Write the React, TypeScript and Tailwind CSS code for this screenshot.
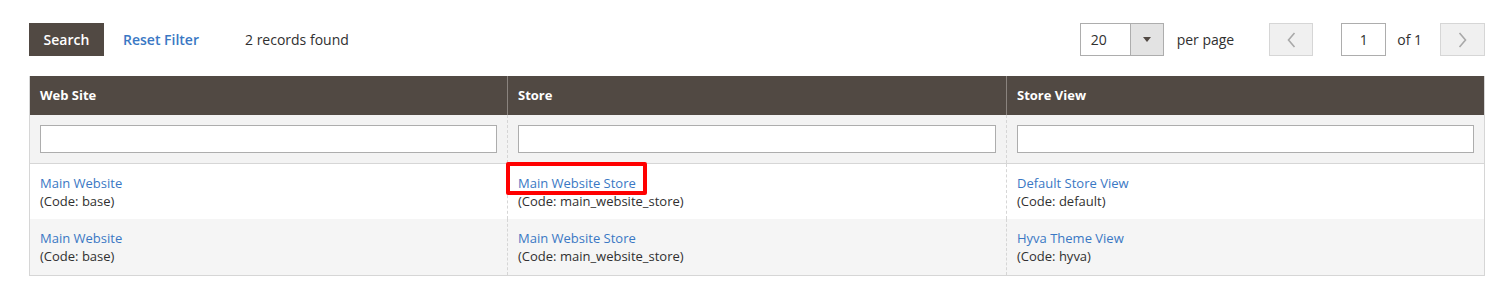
import React from "react";

const rows = [
  {
    bg: "bg-white",
    h: "h-[55px]",
    site: "Main Website",
    siteCode: "base",
    store: "Main Website Store",
    storeCode: "main_website_store",
    view: "Default Store View",
    viewCode: "default",
    highlight: true,
  },
  {
    bg: "bg-[#f5f5f5]",
    h: "h-[56px]",
    site: "Main Website",
    siteCode: "base",
    store: "Main Website Store",
    storeCode: "main_website_store",
    view: "Hyva Theme View",
    viewCode: "hyva",
    highlight: false,
  },
];

function Cell({ name, code, last, highlight }: { name: string; code: string; last?: boolean; highlight?: boolean }) {
  return (
    <div
      className={`relative pl-[10px] pt-[10px] h-full ${last ? "" : "border-r border-dashed border-[#d6d6d6]"}`}
    >
      <div className="text-[13px] leading-[18px] text-[#3a78c4]">{name}</div>
      <div className="text-[13px] leading-[18px] text-[#303030]">(Code: {code})</div>
      {highlight && (
        <div className="absolute left-[-2px] top-[-2px] w-[141px] h-[33px] border-[4px] border-[#ff0000] rounded-[2px]" />
      )}
    </div>
  );
}

export default function App() {
  return (
    <div
      className="w-[1510px] h-[302px] bg-white pl-[29px] pr-[25px] pt-[23px]"
      style={{ fontFamily: '"Open Sans", "Noto Sans", sans-serif' }}
    >
      <div className="flex items-center h-[33px] w-[1456px]">
        <button className="h-[33px] w-[75px] bg-[#514943] text-white text-[14px] font-semibold">Search</button>
        <span className="ml-[19px] text-[14px] font-semibold text-[#3a78c4]">Reset Filter</span>
        <span className="ml-[46px] text-[14px] text-[#303030]">2 records found</span>
        <div className="ml-auto flex items-center">
          <div className="flex h-[33px] w-[84px] border border-[#adadad]">
            <div className="flex-1 flex items-center pl-[10px] text-[14px] text-[#303030]">20</div>
            <div className="w-[33px] bg-[#e3e3e3] border-l border-[#adadad] flex items-center justify-center">
              <svg width="8" height="5" viewBox="0 0 8 5">
                <path d="M0 0 L8 0 L4 5 Z" fill="#514943" />
              </svg>
            </div>
          </div>
          <span className="ml-[13px] text-[14px] text-[#303030]">per page</span>
          <div className="ml-[35px] w-[44px] h-[33px] bg-[#f0f0f0] border border-[#d6d6d6] flex items-center justify-center">
            <svg width="9" height="16" viewBox="0 0 9 16">
              <path d="M7.5 1 L1.5 8 L7.5 15" stroke="#a8a8a8" strokeWidth="1.6" fill="none" />
            </svg>
          </div>
          <div className="ml-[28px] w-[45px] h-[33px] border border-[#adadad] flex items-center justify-center text-[14px] text-[#303030]">
            1
          </div>
          <span className="ml-[11px] text-[14px] text-[#303030]">of 1</span>
          <div className="ml-[18px] w-[45px] h-[33px] bg-[#f0f0f0] border border-[#d6d6d6] flex items-center justify-center">
            <svg width="9" height="16" viewBox="0 0 9 16">
              <path d="M1.5 1 L7.5 8 L1.5 15" stroke="#a8a8a8" strokeWidth="1.6" fill="none" />
            </svg>
          </div>
        </div>
      </div>

      <div className="mt-[20px] w-[1456px] border-l border-r border-b border-[#d6d6d6]">
        <div className="grid grid-cols-[478px_499px_1fr] h-[39px] bg-[#514943] text-white text-[13px] font-bold">
          <div className="pl-[10px] flex items-center border-r border-[#8a837e]">Web Site</div>
          <div className="pl-[10px] flex items-center border-r border-[#8a837e]">Store</div>
          <div className="pl-[10px] flex items-center">Store View</div>
        </div>
        <div className="grid grid-cols-[478px_499px_1fr] h-[49px] bg-[#f3f3f3] border-b border-[#d6d6d6]">
          <div className="pl-[10px] pr-[10px] pt-[10px] border-r border-dashed border-[#d6d6d6]">
            <div className="h-[28px] bg-white border border-[#adadad]" />
          </div>
          <div className="pl-[10px] pr-[10px] pt-[10px] border-r border-dashed border-[#d6d6d6]">
            <div className="h-[28px] bg-white border border-[#adadad]" />
          </div>
          <div className="pl-[10px] pr-[10px] pt-[10px]">
            <div className="h-[28px] bg-white border border-[#adadad]" />
          </div>
        </div>
        {rows.map((r, i) => (
          <div key={i} className={`grid grid-cols-[478px_499px_1fr] ${r.h} ${r.bg}`}>
            <Cell name={r.site} code={r.siteCode} />
            <Cell name={r.store} code={r.storeCode} highlight={r.highlight} />
            <Cell name={r.view} code={r.viewCode} last />
          </div>
        ))}
      </div>
    </div>
  );
}
